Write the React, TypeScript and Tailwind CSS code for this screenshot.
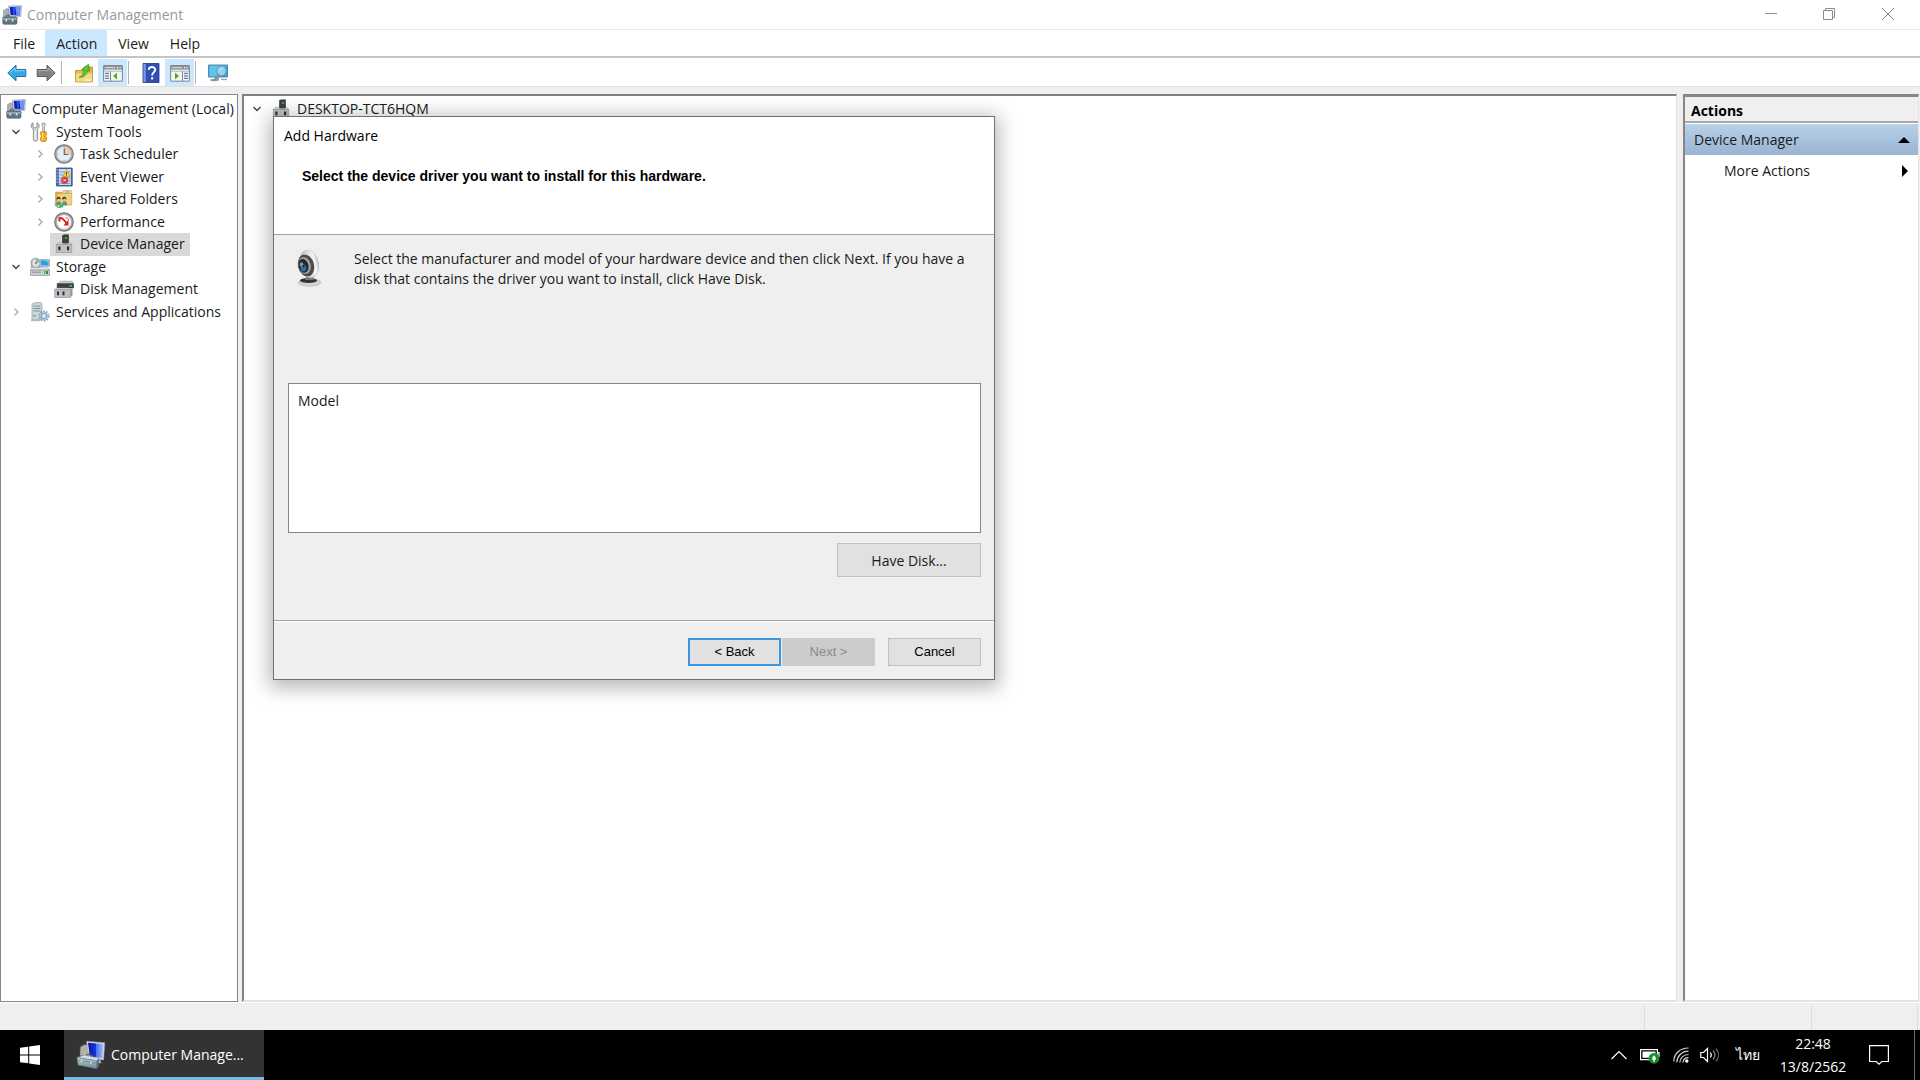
import type { ReactNode } from "react";

type IconProps = { className?: string };

function ComputerIcon({ className = "size-5" }: IconProps) {
  return (
    <svg viewBox="0 0 20 20" className={className} aria-hidden="true">
      <path d="M1.500 5.500 5 3.500l2 1v8l-3 1.500-2.500-1z" fill="#aab0b5" stroke="#7c8288" strokeWidth=".5" />
      <path d="M6.500 1 19.500.6l-.6 11-11.400-.6z" fill="#cfd3dc" stroke="#8b90a0" strokeWidth=".5" />
      <path d="M7.800 2 18.300 1.800l-.5 8.600-9.200-.5z" fill="#0b1fc4" />
      <path d="M13.200 1.900 18.300 1.800l-.5 8.600-3.300-.2z" fill="#6f93f5" />
      <path d="M10.500 1.900h1.800l1 8.200h-2z" fill="#2f56e0" />
      <path d="M11 12h4l1.500 2h-6z" fill="#b9bdc3" />
      <path d="M4 11.500c0-2 4-2 4 0v1" fill="none" stroke="#434a50" strokeWidth=".9" />
      <path d="M.7 12.600 3 11.800h10.500l1.500 1v5.600l-1 .9H1.800l-1.100-1z" fill="#5f7480" stroke="#44535c" strokeWidth=".5" />
      <path d="M.9 12.900h13.800v2H.9z" fill="#93a7b1" />
      <path d="M3.500 14.300h1.600v2.200H3.500zM9.800 14.300h1.600v2.200H9.800z" fill="#e3e8ea" />
    </svg>
  );
}

function ToolboxIcon() {
  return (
    <svg viewBox="0 0 30 30" className="size-[30px]" aria-hidden="true">
      <defs>
        <linearGradient id="box-screen" x1="0" x2="1">
          <stop offset="0" stopColor="#0a17a8" />
          <stop offset=".5" stopColor="#1835e0" />
          <stop offset=".55" stopColor="#4d74f2" />
          <stop offset="1" stopColor="#a6bdfb" />
        </linearGradient>
        <linearGradient id="box-body" x1="0" y1="0" x2="0" y2="1">
          <stop offset="0" stopColor="#b9cdd2" />
          <stop offset="1" stopColor="#6f8b93" />
        </linearGradient>
      </defs>
      <path d="m4.500 7 4.500-2.500 4 2v10l-9-1z" fill="#b5b0a8" stroke="#88847e" strokeWidth=".5" />
      <path d="m10.500 1.200 18.300 1.500-1.200 17.200-14.800-2z" fill="#dcdee4" stroke="#969aa6" strokeWidth=".5" />
      <path d="m12 2.700 15.300 1.200-1 14.300-12.500-1.700z" fill="url(#box-screen)" />
      <path d="m16 18 8 1.200 1.500 4H17z" fill="#a9adb2" />
      <path d="M9.500 16.500c1-3.500 7.500-2.500 8 1.500" fill="none" stroke="#50595e" strokeWidth="1.200" />
      <path d="m1 17.500 7.500-2.300 14.500 3-2 2.500z" fill="#d3e0e3" stroke="#87989e" strokeWidth=".4" />
      <path d="m1 17.500 19.800 3.300v8L2 25z" fill="url(#box-body)" stroke="#5d747b" strokeWidth=".5" />
      <path d="m20.800 20.800 2.200-2.600-.3 8.300-1.900 2.300z" fill="#57717a" />
      <path d="m1.200 20 19.600 3.300" stroke="#5a7179" strokeWidth=".6" />
      <path d="m4.500 19.500 1.700.3v3l-1.700-.3zM14 21l1.700.3v3l-1.700-.3z" fill="#eef2f3" stroke="#66777d" strokeWidth=".3" />
    </svg>
  );
}

function ToolsIcon() {
  return (
    <svg viewBox="0 0 20 20" className="size-5" aria-hidden="true">
      <path d="M3 .8v4l2 1.400 2-1.400v-4c2.600 1.200 2.800 4.800.6 6.400v10.600c0 1.800-4.200 1.800-4.200 0V7.200C.3 5.600.5 2 3 .8z" fill="#d5d8db" stroke="#74797d" strokeWidth=".8" />
      <path d="M5.200 8.500v9" stroke="#fff" strokeWidth="1" />
      <path d="M12.300 1h2.600l.3 2.500-.7 1V10h-1.800V4.500l-.7-1z" fill="#d7dade" stroke="#74797d" strokeWidth=".6" />
      <path d="M10.800 9.800h5.400l.6 2-1 1.500v1.500l1 1.300-.5 2.600c-1 1.300-4.600 1.300-5.600 0l-.5-2.600 1-1.300v-1.500l-1-1.500z" fill="#f3aa18" stroke="#b97608" strokeWidth=".6" />
      <path d="M12.600 10.500v7.500" stroke="#fde08a" strokeWidth="1.100" />
    </svg>
  );
}

function ClockIcon() {
  return (
    <svg viewBox="0 0 20 20" className="size-5" aria-hidden="true">
      <circle cx="10" cy="10" r="9.200" fill="#b4b6b8" stroke="#77797b" strokeWidth="1.200" />
      <circle cx="10" cy="10" r="7.400" fill="#e6f0f8" stroke="#a2a5a8" strokeWidth=".6" />
      <path d="M10 10V3a7 7 0 0 1 7 7z" fill="#f5cf92" />
      <path d="M10.300 4.500V10.500H14.500" fill="none" stroke="#4b6788" strokeWidth="1.200" />
      <path d="M10 3.200v1M10 15.800v1M3.200 10h1M15.800 10h1" stroke="#777" strokeWidth=".7" />
    </svg>
  );
}

function EventIcon() {
  return (
    <svg viewBox="0 0 20 20" className="size-5" aria-hidden="true">
      <path d="M2.500 1h15.700v18H2.500z" fill="#4a6fb2" stroke="#2e4a86" strokeWidth=".8" />
      <path d="M5 2h12v16H5z" fill="#ccdaf0" />
      <path d="M5.500 5h11M5.500 8h11M5.500 11h11M5.500 14h11M5.500 16.500h11" stroke="#7b93c4" strokeWidth=".8" />
      <path d="M1.400 3h3M1.400 6h3M1.400 9h3M1.400 12h3M1.400 15h3" stroke="#a9b0bc" strokeWidth="1.200" />
      <path d="m12.500 2.800 4 7H8.700z" fill="#fad53a" stroke="#b58f0c" strokeWidth=".6" />
      <path d="M12.500 5.200v2.300M12.500 8.300v.8" stroke="#333" strokeWidth="1" />
      <circle cx="10.600" cy="13.300" r="3.400" fill="#d83a3a" stroke="#b85050" strokeWidth=".6" />
      <path d="m9.500 12.200 2.200 2.200M11.700 12.200l-2.200 2.200" stroke="#fff" strokeWidth="1" />
    </svg>
  );
}

function SharedIcon() {
  return (
    <svg viewBox="0 0 20 20" className="size-5" aria-hidden="true">
      <path d="M1.500 3h6l1.500 1.500V16H1.500z" fill="#e0b252" stroke="#bd8f33" strokeWidth=".5" />
      <path d="M9 1.500h8.500V5H9z" fill="#f7e3a2" stroke="#c59a3e" strokeWidth=".5" />
      <path d="M11 2.200h4.500v1.600H11z" fill="#8fb9e4" />
      <path d="M3 4.500h14.800V16L3 17z" fill="#f4d27c" stroke="#c59a3e" strokeWidth=".6" />
      <path d="M2 16.500c0-5.500 5.500-5.500 5.500-.8M8 16c0-5.500 5.200-5.500 5.200 0" fill="#4f9a86" />
      <circle cx="4.600" cy="10.500" r="1.900" fill="#e3b98e" />
      <circle cx="10.300" cy="10.500" r="1.900" fill="#e3b98e" />
      <path d="M2.500 10.500c-.2-3.600 4.600-3.600 4.200 0-1-.2-1.200-1-1.400-1.500-.5.800-1.500 1.300-2.800 1.500zM8.200 10.500c-.2-3.600 4.600-3.600 4.200 0-1-.2-1.200-1-1.400-1.500-.5.800-1.500 1.300-2.800 1.500z" fill="#3d3022" />
      <path d="M.8 14.500c1 3 4 4 5.700 2.300l-.7-1.100h3.500l-.6 3.300-1-.9C5.800 20 1.200 18.700.4 14.800z" fill="#35ac6c" />
    </svg>
  );
}

function PerformanceIcon() {
  return (
    <svg viewBox="0 0 20 20" className="size-5" aria-hidden="true">
      <circle cx="10" cy="10" r="9.200" fill="#b9bbbd" stroke="#6f7173" strokeWidth="1.200" />
      <circle cx="10" cy="10" r="7.400" fill="#fff" stroke="#9a9c9e" strokeWidth=".7" />
      <path d="M5.500 9.500V6.200c2-.8 3.300 0 4.500 1.800l3.500 4.500" fill="none" stroke="#dd1f1f" strokeWidth="2" />
      <path d="M14.500 7.500v6h-5z" fill="#dd1f1f" />
      <path d="M11.500 5.500c1.800.2 2.800 1 3.300 2.500" fill="none" stroke="#e05050" strokeWidth="1" />
    </svg>
  );
}

function DeviceIcon() {
  return (
    <svg viewBox="0 0 20 20" className="size-5" aria-hidden="true">
      <path d="M8.500 1.500 10 .8h4.500V10h-6z" fill="#3b3f3d" stroke="#202322" strokeWidth=".5" />
      <path d="M11.300 3h1.400v2h-1.400z" fill="#3fdc58" />
      <path d="m2.500 10.500 1.800-2h12l1.400 2z" fill="#e4e5e8" stroke="#8d8f95" strokeWidth=".5" />
      <path d="M8.500 6h6v3.500h-6z" fill="#3b3f3d" />
      <path d="M2.300 10.300h15.400v8.300H2.300z" fill="#bfc1c7" stroke="#85888f" strokeWidth=".6" />
      <path d="M4.300 12.500h2.200v3.800H4.300zM13 12.500h2.200v3.800H13z" fill="#2c2e31" />
    </svg>
  );
}

function StorageIcon() {
  return (
    <svg viewBox="0 0 20 20" className="size-5" aria-hidden="true">
      <path d="M1 3.500c3-3.300 7-3 9 0v7H1z" fill="#b6bbc0" stroke="#8a9095" strokeWidth=".5" />
      <circle cx="6" cy="6" r="4.200" fill="#dfe6e2" stroke="#8f979a" strokeWidth=".6" />
      <path d="M6 1.800A4.200 4.200 0 0 1 10 5L6 6z" fill="#7fc48c" />
      <circle cx="6" cy="6" r="1.200" fill="#8b9196" />
      <path d="M10 2.500h9.500v7H10z" fill="#d5dade" stroke="#7c8389" strokeWidth=".5" />
      <path d="M10.800 3.300h7.900v5.300h-7.900z" fill="#28a2e0" />
      <path d="M14.500 3.300h4.200v2.500z" fill="#7bd0f6" />
      <path d="m.6 13 1.800-2.300h15.400l1.700 2.300z" fill="#eceef0" stroke="#8b9095" strokeWidth=".5" />
      <path d="M.5 13h19v5.500H.5z" fill="#c9ccd0" stroke="#80858a" strokeWidth=".6" />
      <path d="M2 15.200h9" stroke="#8c9196" strokeWidth="1" />
      <path d="M14 14h1.200v3H14z" fill="#43b54f" />
      <path d="M16 14h2v3h-2z" fill="#2b8c36" />
    </svg>
  );
}

function DiskIcon() {
  return (
    <svg viewBox="0 0 20 20" className="size-5" aria-hidden="true">
      <path d="m3.500 5 3-2.800h11.700l1.300 2.500z" fill="#c8cacd" stroke="#85888c" strokeWidth=".5" />
      <path d="M3.200 4.700h16.300V9H3.200z" fill="#3d4240" stroke="#222" strokeWidth=".5" />
      <path d="M15.500 6h2.500v1.600h-2.500z" fill="#36d653" />
      <path d="M.8 10.800 2.300 9h13l1.500 1.800z" fill="#e6e7ea" stroke="#8d8f95" strokeWidth=".5" />
      <path d="M.7 10.700h15.600v7.800H.7z" fill="#bfc1c7" stroke="#85888f" strokeWidth=".6" />
      <path d="M16.300 10.700 18.500 9v7.500l-2.200 2z" fill="#94979d" />
      <path d="M3 12.500h2v3.800H3zM8.500 12.500h2v3.800h-2z" fill="#2c2e31" />
    </svg>
  );
}

function ServicesIcon() {
  return (
    <svg viewBox="0 0 20 20" className="size-5" aria-hidden="true">
      <path d="M2 2 5 .6h6l1 1V18H2z" fill="#cfd6da" stroke="#87939a" strokeWidth=".6" />
      <path d="M3.500 4h7M3.500 6.500h7M3.500 9h7" stroke="#81919b" strokeWidth="1.100" />
      <path d="M3.500 13h2v1.500h-2z" fill="#54b35e" />
      <path d="M1 17.200h9v2H1z" fill="#b1bcc3" />
      <circle cx="14" cy="14" r="4.600" fill="none" stroke="#7e9fbe" strokeWidth="2" strokeDasharray="1.600 1.290" />
      <circle cx="14" cy="14" r="2.700" fill="#eef5fa" stroke="#8fb0cf" strokeWidth="2" />
    </svg>
  );
}

function ArrowIcon({ back = false }: { back?: boolean }) {
  return (
    <svg viewBox="0 0 20 20" className="size-5" aria-hidden="true">
      {back ? (
        <path d="M.8 10 9 2.200v4.300h9.800v7H9v4.300z" fill="#36a9e8" stroke="#2171a8" strokeWidth="1" strokeLinejoin="round" />
      ) : (
        <path d="M19.200 10 11 2.200v4.300H1.200v7H11v4.300z" fill="#828282" stroke="#5c5c5c" strokeWidth="1" strokeLinejoin="round" />
      )}
      {back ? <path d="M2.800 9.700 8 5v2.700h9.600" fill="none" stroke="#8fd6fa" strokeWidth="1" /> : <path d="M2.300 7.700h9.800V5l4.800 4.500" fill="none" stroke="#b0b0b0" strokeWidth="1" />}
    </svg>
  );
}

function UpFolderIcon() {
  return (
    <svg viewBox="0 0 20 20" className="size-5" aria-hidden="true">
      <path d="M1.500 7.500h7L10.500 4h8v15h-17z" fill="#e3b85a" stroke="#b98d31" strokeWidth=".8" />
      <path d="M1.900 10.500h16.200v8.100H1.900z" fill="#f6d983" />
      <path d="M5 14.200c3-.7 4.500-3.700 4.800-7L7.500 6.500 14.500 1.200l1.300 7-2.400-.6C12.500 12 10 14.800 5 14.200z" fill="#5cc62f" stroke="#2f8d16" strokeWidth=".7" />
      <path d="M11.500 17h5.500" stroke="#fff" strokeWidth="1" />
    </svg>
  );
}

function PaneIcon({ right = false }: { right?: boolean }) {
  return (
    <svg viewBox="0 0 20 20" className="size-5" aria-hidden="true">
      <path d="M.6 2.500h18.800v15.700H.6z" fill="#f4f4f4" stroke="#7f868d" strokeWidth="1" />
      <path d="M1 3h18v3.600H1z" fill="#8b949c" />
      <path d="M2 4.600h10" stroke="#d8dde1" strokeWidth="1" />
      <path d="M14 4.600h1M16.500 4.600h1" stroke="#fff" strokeWidth="1.200" />
      <path d="M1 8.200h18" stroke="#b3bac0" strokeWidth="1" />
      {right ? (
        <>
          <path d="M12.500 8.500v9.500" stroke="#7f868d" strokeWidth="1" />
          <path d="M14 10.300h4M14 12.800h4M14 15.300h4" stroke="#5c7fae" strokeWidth="1.200" />
          <path d="m5 9.700 4 3.400-4 3.400z" fill="#3eb71d" />
        </>
      ) : (
        <>
          <path d="M7.500 8.500v9.500" stroke="#7f868d" strokeWidth="1" />
          <path d="M2 10.300h4M2 12.800h4M2 15.300h4" stroke="#5c7fae" strokeWidth="1.200" />
          <path d="m14 9.700-4 3.400 4 3.400z" fill="#3eb71d" />
        </>
      )}
    </svg>
  );
}

function HelpIcon() {
  return (
    <svg viewBox="0 0 20 20" className="size-5" aria-hidden="true">
      <path d="M2 .5h16v19H2z" fill="#2f4fb5" stroke="#1f3584" strokeWidth=".8" />
      <path d="M2.400.900h2.400v18.200H2.400z" fill="#7d95dc" />
      <path d="M7.700 6.700c.2-3.700 6.600-3.600 6.500.1 0 2.500-3.100 2.700-3.100 5.600" fill="none" stroke="#fff" strokeWidth="1.900" />
      <path d="M10.100 14.200h2.100v2.200h-2.100z" fill="#fff" />
    </svg>
  );
}

function ScanIcon() {
  return (
    <svg viewBox="0 0 20 20" className="size-5" aria-hidden="true">
      <path d="M.5 2h19v12H.5z" fill="#3aa6d8" stroke="#4b7f9c" strokeWidth=".9" />
      <path d="M1.300 2.800h17.400L8 13.200H1.300z" fill="#64c3ea" />
      <path d="M8 14.200h3v2.300H8z" fill="#8a979e" />
      <path d="M2.500 16.300h8v1.500h-8z" fill="#778790" />
      <circle cx="13.500" cy="8" r="4.700" fill="#b3dff3" fillOpacity=".75" stroke="#5f9abd" strokeWidth="1.100" />
      <path d="M10.300 11.500 6 17.600" stroke="#7b94a3" strokeWidth="1.900" strokeLinecap="round" />
      <path d="M13 16.500h6" stroke="#8fa5b0" strokeWidth="1.300" />
    </svg>
  );
}

function WebcamIcon() {
  return (
    <svg viewBox="0 0 26 38" className="h-[38px] w-[26px]" aria-hidden="true">
      <defs>
        <linearGradient id="cam-shell" x1="0" x2="1">
          <stop offset="0" stopColor="#a5a5a5" />
          <stop offset=".8" stopColor="#f6f6f6" />
          <stop offset="1" stopColor="#c4c4c4" />
        </linearGradient>
      </defs>
      <ellipse cx="13.500" cy="33.500" rx="11.300" ry="3.700" fill="#d2d2d2" stroke="#b0b0b0" strokeWidth=".6" />
      <ellipse cx="12.500" cy="31.500" rx="8.500" ry="2.500" fill="#333" />
      <path d="M11 26h6l1 5H9z" fill="#777" />
      <ellipse cx="13" cy="15" rx="9.500" ry="14" transform="rotate(-12 13 15)" fill="url(#cam-shell)" stroke="#c0c0c0" strokeWidth=".6" />
      <ellipse cx="10" cy="16.500" rx="8" ry="11" transform="rotate(-14 10 16.500)" fill="#4b4b4b" />
      <ellipse cx="8.500" cy="16.500" rx="6.200" ry="8.600" transform="rotate(-14 8.500 16.500)" fill="#a3a5a7" />
      <ellipse cx="7.500" cy="16.800" rx="5" ry="7" transform="rotate(-14 7.500 16.800)" fill="#23272c" />
      <ellipse cx="7.500" cy="19" rx="2.800" ry="3.600" fill="#2a6ea6" />
      <ellipse cx="5.500" cy="15.500" rx="1.800" ry="2.200" fill="#8a9096" />
      <circle cx="7.500" cy="17" r="1" fill="#111" />
    </svg>
  );
}

function Chevron({ open = false }: { open?: boolean }) {
  return (
    <svg viewBox="0 0 10 10" className="size-[10px]" fill="none" aria-hidden="true">
      {open ? <path d="m1.500 3 3.500 3.500L8.500 3" stroke="#404040" strokeWidth="1.300" /> : <path d="m3.500 1.500 3.500 3.500-3.500 3.500" stroke="#a6a6a6" strokeWidth="1.300" />}
    </svg>
  );
}

type TreeItem = { label: string; level: 0 | 1 | 2; icon: ReactNode; state?: "open" | "closed"; selected?: boolean };

const tree: TreeItem[] = [
  { label: "Computer Management (Local)", level: 0, icon: <ComputerIcon /> },
  { label: "System Tools", level: 1, icon: <ToolsIcon />, state: "open" },
  { label: "Task Scheduler", level: 2, icon: <ClockIcon />, state: "closed" },
  { label: "Event Viewer", level: 2, icon: <EventIcon />, state: "closed" },
  { label: "Shared Folders", level: 2, icon: <SharedIcon />, state: "closed" },
  { label: "Performance", level: 2, icon: <PerformanceIcon />, state: "closed" },
  { label: "Device Manager", level: 2, icon: <DeviceIcon />, selected: true },
  { label: "Storage", level: 1, icon: <StorageIcon />, state: "open" },
  { label: "Disk Management", level: 2, icon: <DiskIcon /> },
  { label: "Services and Applications", level: 1, icon: <ServicesIcon />, state: "closed" },
];

const indents = { 0: "pl-0", 1: "pl-[5px]", 2: "pl-[29px]" };

function TreeRow({ item }: { item: TreeItem }) {
  return (
    <li className={`flex min-h-0 items-center ${indents[item.level]}`}>
      {item.level > 0 && (
        <span className="flex w-5 shrink-0 items-center justify-center">{item.state && <Chevron open={item.state === "open"} />}</span>
      )}
      <button className={`flex h-full items-center gap-[6px] pr-[5px] whitespace-nowrap ${item.level > 0 ? "pl-1" : "pl-[5px]"} ${item.selected ? "bg-[#d9d9d9]" : ""}`}>
        {item.icon}
        <span>{item.label}</span>
      </button>
    </li>
  );
}

function TitleBar() {
  return (
    <header className="flex h-[30px] items-center border-b border-[#e6e6e6] bg-white">
      <div className="flex flex-1 items-center gap-[5px] pl-[2px] text-[#999999]">
        <ComputerIcon />
        <h1>Computer Management</h1>
      </div>
      <div className="flex h-full pr-[2px] text-[#8c8c8c]">
        <button aria-label="Minimize" className="flex w-[58px] items-center justify-center pb-[2px]">
          <svg viewBox="0 0 12 12" className="size-3" stroke="currentColor"><path d="M0 5.500h12" /></svg>
        </button>
        <button aria-label="Restore" className="flex w-[58px] items-center justify-center pb-[2px]">
          <svg viewBox="0 0 12 12" className="size-3" fill="none" stroke="currentColor"><path d="M.5 2.500h9v9h-9zM2.500 2.500v-2h9v9h-2" /></svg>
        </button>
        <button aria-label="Close" className="flex w-[60px] items-center justify-center pb-[2px]">
          <svg viewBox="0 0 12 12" className="size-3" stroke="currentColor"><path d="m0 0 12 12M12 0 0 12" /></svg>
        </button>
      </div>
    </header>
  );
}

function MenuBar() {
  return (
    <nav className="flex h-[28px] border-b-2 border-[#c3c5ca] bg-white pl-[2px]">
      {["File", "Action", "View", "Help"].map((label) => (
        <button key={label} className={`pt-px pr-[10px] pl-[11px] ${label === "Action" ? "bg-[#cce8ff]" : ""}`}>
          {label}
        </button>
      ))}
    </nav>
  );
}

function ToolButton({ label, active = false, children }: { label: string; active?: boolean; children: ReactNode }) {
  return (
    <button aria-label={label} className={`flex w-[29px] items-center justify-center ${active ? "bg-[#cce8ff]" : ""}`}>
      {children}
    </button>
  );
}

function ToolSeparator() {
  return <div className="my-[2px] mr-[7px] ml-px w-px bg-[#b4b4b4]" />;
}

function Toolbar() {
  return (
    <div className="flex h-[29px] border-b border-[#e0e0e0] bg-white pt-px pl-[2px]">
      <ToolButton label="Back"><ArrowIcon back /></ToolButton>
      <ToolButton label="Forward"><ArrowIcon /></ToolButton>
      <ToolSeparator />
      <ToolButton label="Up one level"><UpFolderIcon /></ToolButton>
      <ToolButton label="Show or hide console tree" active><PaneIcon /></ToolButton>
      <ToolSeparator />
      <ToolButton label="Help"><HelpIcon /></ToolButton>
      <ToolButton label="Show or hide action pane" active><PaneIcon right /></ToolButton>
      <ToolSeparator />
      <ToolButton label="Scan for hardware changes"><ScanIcon /></ToolButton>
    </div>
  );
}

function ActionsPane() {
  return (
    <aside className="w-[236px] shrink-0 border-t-3 border-r border-b-2 border-l-2 border-t-[#868686] border-r-[#e3e3e3] border-b-[#e3e3e3] border-l-[#868686] bg-white">
      <h2 className="flex h-[26px] items-center border-b-2 border-[#a8a8a8] bg-[#efefef] pt-[3px] pl-[6px] font-['Open_Sans',sans-serif] text-sm font-bold text-black">Actions</h2>
      <button className="mt-px flex h-[31px] w-full items-center justify-between bg-linear-to-b from-[#b9d1ea] to-[#99b4d1] pt-px pr-2 pl-[9px]">
        Device Manager
        <svg viewBox="0 0 12 6" className="h-[6px] w-3" aria-hidden="true"><path d="m6 0 6 6H0z" fill="#000" /></svg>
      </button>
      <button className="flex h-[31px] w-full items-center justify-between pr-[10px] pl-[39px]">
        More Actions
        <svg viewBox="0 0 6 12" className="h-3 w-[6px]" aria-hidden="true"><path d="m0 0 6 6-6 6z" fill="#000" /></svg>
      </button>
    </aside>
  );
}

function AddHardwareDialog() {
  const small = "h-7 w-[93px] font-['Liberation_Sans',Arial,sans-serif] text-[13px]";
  return (
    <section
      role="dialog"
      aria-labelledby="dialog-title"
      className="absolute top-[116px] left-[273px] w-[722px] border border-[#707070] bg-[#efefef] shadow-[0_4px_18px_4px_rgba(0,0,0,0.28)]"
    >
      <div className="h-[118px] border-b border-[#a0a0a0] bg-white pt-[9px] pl-[10px] text-black">
        <h2 id="dialog-title" className="leading-5">Add Hardware</h2>
        <p className="pt-5 pl-[18px] font-['Liberation_Sans',Arial,sans-serif] text-sm leading-5 font-bold">
          Select the device driver you want to install for this hardware.
        </p>
      </div>
      <div className="border-b border-[#a0a0a0] pr-[13px] pb-[43px] pl-[14px]">
        <div className="flex h-[148px] items-start gap-[32px] pt-[14px] pl-2">
          <WebcamIcon />
          <p className="leading-5 whitespace-nowrap">
            Select the manufacturer and model of your hardware device and then click Next. If you have a
            <br />
            disk that contains the driver you want to install, click Have Disk.
          </p>
        </div>
        <div className="h-[150px] border border-[#828790] bg-white px-[9px] pt-[7px]">
          <table>
            <thead>
              <tr>
                <th className="text-left leading-5 font-normal">Model</th>
              </tr>
            </thead>
          </table>
        </div>
        <div className="flex justify-end pt-[10px]">
          <button className="h-[34px] w-[144px] border border-[#c0c0c0] bg-[#e1e1e1] pt-px">Have Disk...</button>
        </div>
      </div>
      <div className="flex justify-end border-t border-white px-[13px] pt-4 pb-[13px]">
        <button className={`${small} border-2 border-[#3b94dc] bg-[#e1e1e1] text-black`}>&lt; Back</button>
        <button disabled className={`${small} ml-px border border-[#cccccc] bg-[#cccccc] text-[#8a8a8a]`}>Next &gt;</button>
        <button className={`${small} ml-[13px] border border-[#c0c0c0] bg-[#e1e1e1] text-black`}>Cancel</button>
      </div>
    </section>
  );
}

function Taskbar() {
  return (
    <footer className="flex h-[50px] bg-black text-white">
      <button aria-label="Start" className="flex w-16 items-center justify-center pr-1">
        <svg viewBox="0 0 20 20" className="size-5" fill="#fff" aria-hidden="true">
          <path d="M0 2.800 8.200 1.700v7.800H0zM9.200 1.500 20 0v9.500H9.200zM0 10.500h8.200v7.800L0 17.200zM9.200 10.500H20V20L9.200 18.500z" />
        </svg>
      </button>
      <button className="flex w-[200px] items-center gap-[5px] border-b-3 border-[#76b9ed] bg-[#333333] pt-[2px] pl-3">
        <ToolboxIcon />
        Computer Manage...
      </button>
      <div className="ml-auto flex items-center">
        <button aria-label="Show hidden icons" className="mr-[13px]">
          <svg viewBox="0 0 16 10" className="h-[10px] w-4" fill="none" stroke="#fff" strokeWidth="1.200"><path d="m.5 9 7.500-7.500L15.500 9" /></svg>
        </button>
        <button aria-label="Battery" className="mr-[13px]">
          <svg viewBox="0 0 20 18" className="h-[18px] w-5">
            <path d="M.6 3.600h16.800v10H.6zM17.500 6.500h1.500v4h-1.500" fill="none" stroke="#fff" strokeWidth="1.200" />
            <path d="M2.500 5.500h13v6.300h-13z" fill="#fff" />
            <circle cx="14" cy="12.300" r="5.400" fill="#12912a" />
            <path d="M14 9.200c-2.700 2.500-2.200 4.600 0 5.300 2.200-.7 2.700-2.800 0-5.300z" fill="#fff" />
            <path d="M14 12v4" stroke="#fff" />
          </svg>
        </button>
        <button aria-label="Network" className="mr-[11px]">
          <svg viewBox="0 0 16 16" className="size-4" fill="none" stroke="#fff" strokeWidth="1.200">
            <path d="M.8 14.500C.8 6.500 7 1 15.500 1M3.800 15.200c.2-6 5-11 11.700-11M6.800 15.500c.3-4.300 3.500-8 8.700-8M10 15.500c.2-2.500 2-4.800 5.500-4.800" stroke="#d0d0d0" />
            <circle cx="13.800" cy="14" r="1.700" fill="#fff" stroke="none" />
          </svg>
        </button>
        <button aria-label="Volume" className="mr-[15px]">
          <svg viewBox="0 0 20 18" className="h-[18px] w-5" fill="none" strokeWidth="1.200">
            <path d="M.8 6.500h2.700l4-4v13l-4-4H.8z" stroke="#fff" />
            <path d="M10.300 6.500c1.200 1.500 1.200 3.500 0 5" stroke="#fff" />
            <path d="M13 4.500c2.500 2.800 2.500 6.200 0 9" stroke="#8a8a8a" />
            <path d="M15.800 2.500c3.600 4 3.600 9 0 13" stroke="#666" />
          </svg>
        </button>
        <button className="mr-[17px] w-[26px] text-sm">ไทย</button>
        <button className="mr-[21px] w-[70px] text-center leading-[23px] whitespace-nowrap">
          <span className="block">22:48</span>
          <span className="block">13/8/2562</span>
        </button>
        <button aria-label="Notifications" className="mr-[25px]">
          <svg viewBox="0 0 20 20" className="size-5" fill="none" stroke="#fff" strokeWidth="1.200"><path d="M.6.600h18.800v15.900h-6.600L10 19.200l-2.800-2.700H.6z" /></svg>
        </button>
        <div className="mr-[5px] h-[50px] w-px bg-[#6a6a6a]" />
      </div>
    </footer>
  );
}

export default function App() {
  return (
    <div className="relative flex min-h-screen flex-col overflow-hidden bg-[#efefef] font-['Open_Sans','Noto_Sans',sans-serif] text-sm text-[#1a1a1a]">
      <TitleBar />
      <MenuBar />
      <Toolbar />
      <main className="flex flex-1 pt-[7px] pr-px">
        <div className="w-[238px] shrink-0 border border-[#828790] bg-white pt-[3px]">
          <ul className="grid h-[225px] grid-rows-10">
            {tree.map((item) => (
              <TreeRow key={item.label} item={item} />
            ))}
          </ul>
        </div>
        <div className="mr-[6px] ml-1 flex-1 border-t-2 border-r border-b-2 border-l-2 border-t-[#808080] border-r-[#e3e3e3] border-b-[#e3e3e3] border-l-[#808080] bg-white pt-[2px]">
          <div className="flex h-[22px] items-center pl-[3px]">
            <span className="flex w-5 justify-center"><Chevron open /></span>
            <span className="ml-1 flex items-center gap-[6px]">
              <DeviceIcon />
              DESKTOP-TCT6HQM
            </span>
          </div>
        </div>
        <ActionsPane />
      </main>
      <div className="flex h-[28px] justify-end border-t border-white pt-[2px] pr-[2px]">
        <div className="w-[167px] border-l border-[#dcdcdc]" />
        <div className="w-[107px] border-x border-[#dcdcdc]" />
      </div>
      <Taskbar />
      <AddHardwareDialog />
    </div>
  );
}
